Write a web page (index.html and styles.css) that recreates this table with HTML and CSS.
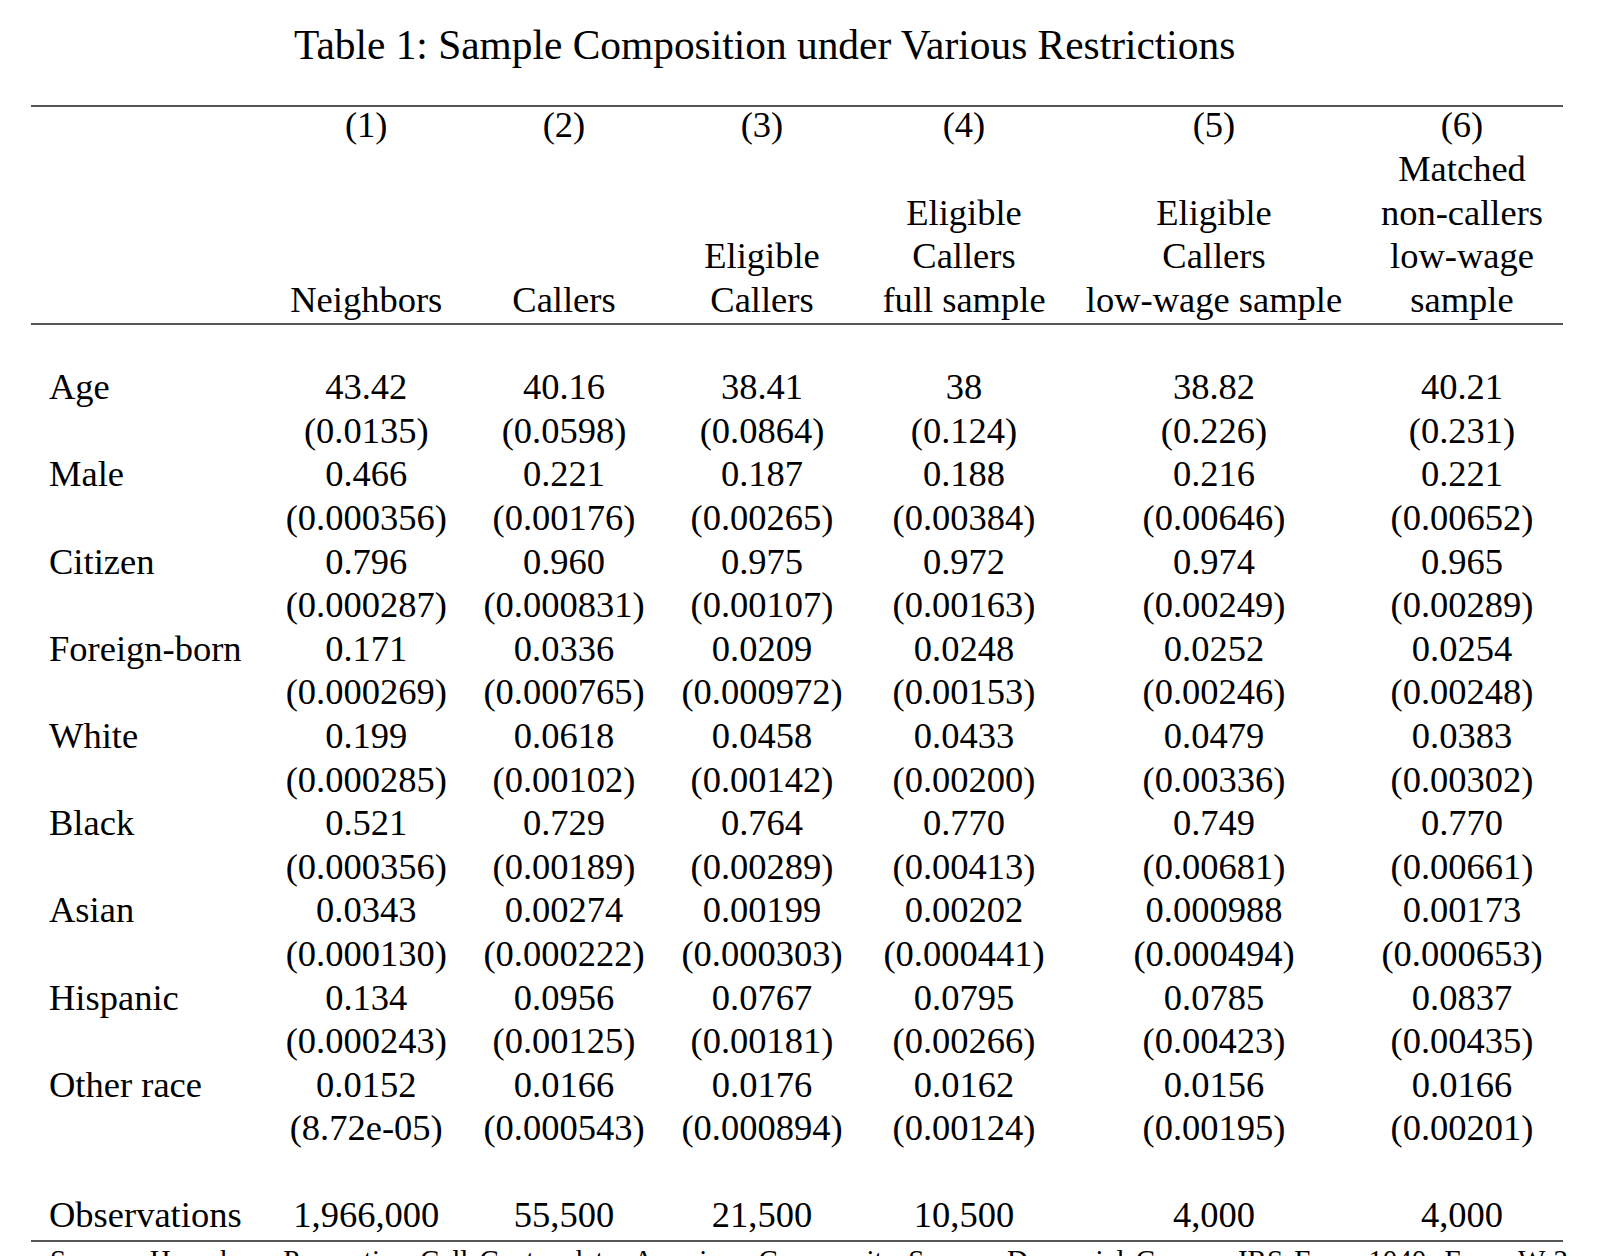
FILE: index.html
```html
<!DOCTYPE html>
<html lang="en">
<head>
<meta charset="utf-8">
<title>Table 1: Sample Composition under Various Restrictions</title>
<link rel="stylesheet" href="styles.css">
</head>
<body>
<div class="page">
  <h1 class="caption">Table 1: Sample Composition under Various Restrictions</h1>
  <table class="tbl">
    <colgroup>
      <col class="c0"><col class="c1"><col class="c2"><col class="c3"><col class="c4"><col class="c5"><col class="c6">
    </colgroup>
    <thead>
      <tr class="nums">
        <th></th>
        <th><div class="up">(1)</div></th>
        <th><div class="up">(2)</div></th>
        <th><div class="up">(3)</div></th>
        <th><div class="up">(4)</div></th>
        <th><div class="up">(5)</div></th>
        <th><div class="up">(6)</div></th>
      </tr>
      <tr class="names">
        <th></th>
        <th>Neighbors</th>
        <th>Callers</th>
        <th>Eligible<br>Callers</th>
        <th>Eligible<br>Callers<br>full sample</th>
        <th>Eligible<br>Callers<br>low-wage sample</th>
        <th>Matched<br>non-callers<br>low-wage<br>sample</th>
      </tr>
    </thead>
    <tbody>
      <tr class="est first"><td class="lbl">Age</td><td>43.42</td><td>40.16</td><td>38.41</td><td>38</td><td>38.82</td><td>40.21</td></tr>
      <tr class="se"><td></td><td>(0.0135)</td><td>(0.0598)</td><td>(0.0864)</td><td>(0.124)</td><td>(0.226)</td><td>(0.231)</td></tr>
      <tr class="est"><td class="lbl">Male</td><td>0.466</td><td>0.221</td><td>0.187</td><td>0.188</td><td>0.216</td><td>0.221</td></tr>
      <tr class="se"><td></td><td>(0.000356)</td><td>(0.00176)</td><td>(0.00265)</td><td>(0.00384)</td><td>(0.00646)</td><td>(0.00652)</td></tr>
      <tr class="est"><td class="lbl">Citizen</td><td>0.796</td><td>0.960</td><td>0.975</td><td>0.972</td><td>0.974</td><td>0.965</td></tr>
      <tr class="se"><td></td><td>(0.000287)</td><td>(0.000831)</td><td>(0.00107)</td><td>(0.00163)</td><td>(0.00249)</td><td>(0.00289)</td></tr>
      <tr class="est"><td class="lbl">Foreign-born</td><td>0.171</td><td>0.0336</td><td>0.0209</td><td>0.0248</td><td>0.0252</td><td>0.0254</td></tr>
      <tr class="se"><td></td><td>(0.000269)</td><td>(0.000765)</td><td>(0.000972)</td><td>(0.00153)</td><td>(0.00246)</td><td>(0.00248)</td></tr>
      <tr class="est"><td class="lbl">White</td><td>0.199</td><td>0.0618</td><td>0.0458</td><td>0.0433</td><td>0.0479</td><td>0.0383</td></tr>
      <tr class="se"><td></td><td>(0.000285)</td><td>(0.00102)</td><td>(0.00142)</td><td>(0.00200)</td><td>(0.00336)</td><td>(0.00302)</td></tr>
      <tr class="est"><td class="lbl">Black</td><td>0.521</td><td>0.729</td><td>0.764</td><td>0.770</td><td>0.749</td><td>0.770</td></tr>
      <tr class="se"><td></td><td>(0.000356)</td><td>(0.00189)</td><td>(0.00289)</td><td>(0.00413)</td><td>(0.00681)</td><td>(0.00661)</td></tr>
      <tr class="est"><td class="lbl">Asian</td><td>0.0343</td><td>0.00274</td><td>0.00199</td><td>0.00202</td><td>0.000988</td><td>0.00173</td></tr>
      <tr class="se"><td></td><td>(0.000130)</td><td>(0.000222)</td><td>(0.000303)</td><td>(0.000441)</td><td>(0.000494)</td><td>(0.000653)</td></tr>
      <tr class="est"><td class="lbl">Hispanic</td><td>0.134</td><td>0.0956</td><td>0.0767</td><td>0.0795</td><td>0.0785</td><td>0.0837</td></tr>
      <tr class="se"><td></td><td>(0.000243)</td><td>(0.00125)</td><td>(0.00181)</td><td>(0.00266)</td><td>(0.00423)</td><td>(0.00435)</td></tr>
      <tr class="est"><td class="lbl">Other race</td><td>0.0152</td><td>0.0166</td><td>0.0176</td><td>0.0162</td><td>0.0156</td><td>0.0166</td></tr>
      <tr class="se"><td></td><td>(8.72e-05)</td><td>(0.000543)</td><td>(0.000894)</td><td>(0.00124)</td><td>(0.00195)</td><td>(0.00201)</td></tr>
      <tr class="obs"><td class="lbl">Observations</td><td>1,966,000</td><td>55,500</td><td>21,500</td><td>10,500</td><td>4,000</td><td>4,000</td></tr>
    </tbody>
  </table>
  <p class="note">Source: Homebase Prevention Call Center data, American Community Survey, Decennial Census, IRS Form 1040, Form W-2 and other information returns. Notes: Means of individual characteristics with standard errors in parentheses for each sample restriction.</p>
</div>
</body>
</html>
```

FILE: styles.css
```css
html, body {
  margin: 0;
  padding: 0;
  background: #ffffff;
  overflow: hidden;
}

body {
  width: 1604px;
  height: 1256px;
  font-family: "Liberation Serif", "Times New Roman", serif;
  color: #000000;
}

.page {
  padding: 21px 0 0 31px;
}

.caption {
  margin: 0 0 36px 0;
  padding-left: 263px;
  width: 950px;
  font-size: 41.4px;
  font-weight: normal;
  line-height: 48px;
  white-space: nowrap;
}

.tbl {
  width: 1532px;
  table-layout: fixed;
  border-collapse: collapse;
  border-top: 2px solid #555555;
  border-bottom: 2px solid #555555;
  font-size: 36.5px;
  line-height: 43.6px;
}

.c0 { width: 236.5px; }
.c1 { width: 197.5px; }
.c2 { width: 198px; }
.c3 { width: 198px; }
.c4 { width: 206px; }
.c5 { width: 294px; }
.c6 { width: 202px; }

.tbl th,
.tbl td {
  padding: 0;
  text-align: center;
  font-weight: normal;
  white-space: nowrap;
}

.tbl .lbl {
  text-align: left;
  padding-left: 18px;
}

.nums th {
  vertical-align: top;
}

.up {
  margin-top: -4.5px;
}

.names th {
  vertical-align: bottom;
  padding-top: 1px;
  padding-bottom: 1.5px;
  border-bottom: 2px solid #555555;
}

.first td {
  padding-top: 40.3px;
}

.obs td {
  padding-top: 42.8px;
  padding-bottom: 3.5px;
}

.note {
  margin: 1px 0 0 0;
  width: 1590px;
  text-indent: 19px;
  font-size: 29px;
  line-height: 35px;
  text-align: justify;
}
```
